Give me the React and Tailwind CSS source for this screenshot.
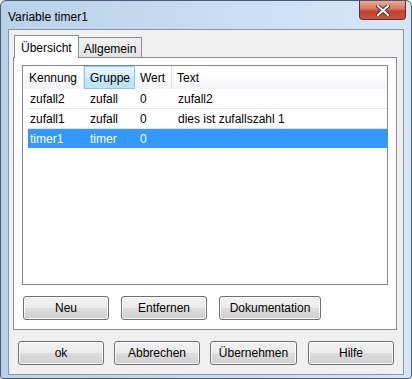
export default function App() {
    const rows = [
        { id: "zufall2", group: "zufall", value: "0", text: "zufall2" },
        { id: "zufall1", group: "zufall", value: "0", text: "dies ist zufallszahl 1" },
        { id: "timer1", group: "timer", value: "0", text: "", selected: true },
    ]

    const btn = "flex h-[24px] items-center justify-center rounded-[3px] border border-[#707070] bg-[linear-gradient(#f2f2f2_0%,#ebebeb_50%,#dddddd_51%,#cfcfcf_100%)] shadow-[inset_0_0_0_1px_#fcfcfc] text-[12px] text-black"

    return (
        <div className="w-[412px] h-[379px] bg-white font-['Liberation_Sans',Arial,sans-serif]">
            <div className="flex h-full w-full flex-col rounded-t-[6px] rounded-b-[3px] border border-[#4b5b6e] bg-[linear-gradient(90deg,#b9d1ea_0%,#c9ddf1_50%,#d6e6f7_100%)] px-[7px] pb-[3px]">
                {/* title bar */}
                <div className="flex h-[28px] items-start justify-between">
                    <span className="pt-[7px] text-[12px] text-black">Variable timer1</span>
                    <div className="mr-[-2px] flex h-[19px] w-[47px] items-center justify-center rounded-b-[4px] border border-t-0 border-[#6e2b22] bg-[linear-gradient(#e9a99b_0%,#d9735f_45%,#c2412c_55%,#c9553f_100%)]">
                        <svg width="14" height="11" viewBox="0 0 14 11">
                            <path d="M2 1 L12 10 M12 1 L2 10" stroke="#3a3a3a" strokeWidth="4" strokeLinecap="square" />
                            <path d="M2 1 L12 10 M12 1 L2 10" stroke="#ffffff" strokeWidth="2" strokeLinecap="square" />
                        </svg>
                    </div>
                </div>

                {/* client area */}
                <div className="flex flex-1 flex-col border border-[#8497ad] bg-[#f0f0f0] px-[4px]">
                    {/* tabs */}
                    <div className="mt-[5px] flex items-end pl-[1px]">
                        <div className="z-10 mb-[-1px] flex h-[23px] items-start border border-b-0 border-[#898c95] bg-white px-[6px] pt-[3px] text-[12px]">Übersicht</div>
                        <div className="flex h-[20px] items-start border border-b-0 border-l-0 border-[#898c95] bg-[linear-gradient(#f2f2f2,#e3e3e3)] px-[5px] pt-[2px] text-[12px]">Allgemein</div>
                    </div>

                    {/* tab panel */}
                    <div className="flex h-[273px] w-[384px] flex-col border border-[#898c95] bg-white px-[8px] pt-[7px]">
                        <div className="h-[220px] border border-[#828790] bg-white">
                            <div className="flex h-[23px] bg-[linear-gradient(#ffffff_0%,#ffffff_40%,#f3f4f6_100%)] text-[12px]">
                                <div className="flex w-[61px] items-center border-r border-[#e5e5e5] pl-[6px]">Kennung</div>
                                <div className="flex w-[51px] items-center border border-[#88cbeb] bg-[linear-gradient(#e8f6fd_0%,#d8effc_45%,#bee6fd_55%,#bce5fc_100%)] pl-[5px]">Gruppe</div>
                                <div className="flex w-[37px] items-center border-r border-[#e5e5e5] pl-[5px]">Wert</div>
                                <div className="flex flex-1 items-center pl-[5px]">Text</div>
                            </div>
                            <div className="pl-[5px]">
                                {rows.map((r) => (
                                    <div
                                        key={r.id}
                                        className={
                                            r.selected
                                                ? "flex h-[19px] items-center bg-[#3399ff] text-[12px] text-white"
                                                : "flex h-[20px] items-center border-b border-[#e6e6e6] pt-[1px] text-[12px] text-black"
                                        }
                                    >
                                        <span className="w-[62px] pl-[2px]">{r.id}</span>
                                        <span className="w-[50px]">{r.group}</span>
                                        <span className="w-[38px]">{r.value}</span>
                                        <span>{r.text}</span>
                                    </div>
                                ))}
                            </div>
                        </div>
                        <div className="mt-[11px] flex gap-[12px] pl-[1px]">
                            <button className={btn + " w-[86px]"}>Neu</button>
                            <button className={btn + " w-[86px]"}>Entfernen</button>
                            <button className={btn + " w-[102px]"}>Dokumentation</button>
                        </div>
                    </div>

                    {/* dialog buttons */}
                    <div className="mt-[11px] flex gap-[10px] pl-[5px]">
                        <button className={btn + " w-[86px]"}>ok</button>
                        <button className={btn + " w-[86px]"}>Abbrechen</button>
                        <button className={btn + " w-[87px]"}>Übernehmen</button>
                        <button className={btn + " w-[86px] ml-[1px]"}>Hilfe</button>
                    </div>
                </div>
            </div>
        </div>
    )
}
